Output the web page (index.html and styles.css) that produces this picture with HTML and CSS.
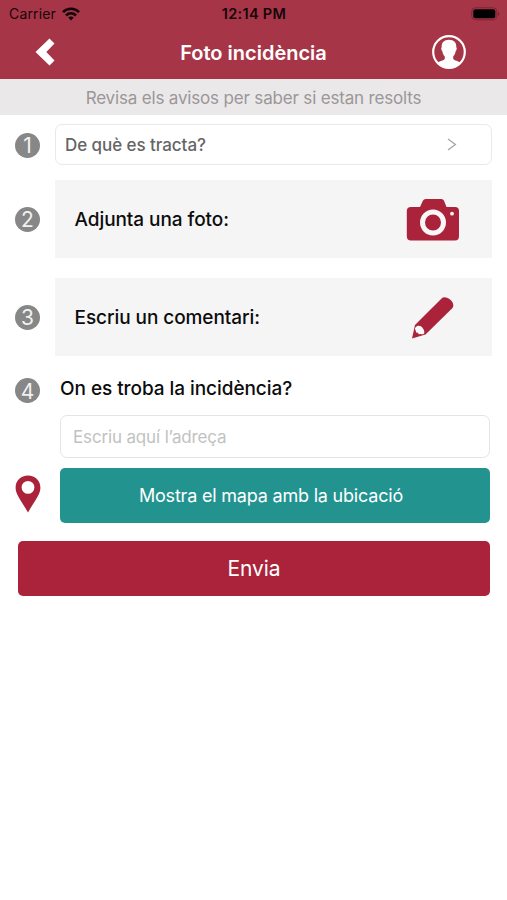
FILE: index.html
```html
<!DOCTYPE html>
<html lang="ca">
<head>
<meta charset="utf-8">
<title>Foto incidència</title>
<link rel="stylesheet" href="styles.css">
</head>
<body>
<header class="header">
  <div class="status">
    <div class="status-left">
      <span class="carrier">Carrier</span>
      <svg class="wifi" width="18" height="14" viewBox="0 0 18 14" fill="none" stroke="#120408" stroke-width="2.6"><path d="M1 5.1C5.5.7 12.500.7 17 5.100"/><path d="M4 8.500c2.900-2.800 7.100-2.800 10 0"/><path d="M6.300 10.600c1.500-1.500 3.900-1.500 5.400 0L9 13.400z" fill="#120408" stroke="none"/></svg>
    </div>
    <time class="clock">12:14 PM</time>
    <svg class="battery" width="29" height="14" viewBox="0 0 29 14"><rect x=".8" y=".8" width="25" height="12" rx="3.500" fill="none" stroke="#7d2335"/><rect x="2.300" y="2.300" width="22" height="9" rx="2" fill="#000"/><path d="M27.300 5q2 2 0 4z" fill="#65192a"/></svg>
  </div>
  <nav class="nav">
    <svg class="back" width="20" height="28" viewBox="0 0 20 28"><path d="M14.500.5 19.500 5.500 11.300 14l8.200 8.500-5 5L.5 14z" fill="#fff"/></svg>
    <h1 class="title">Foto incidència</h1>
    <svg class="profile" width="34" height="34" viewBox="0 0 34 34"><circle cx="17" cy="17" r="15.800" fill="none" stroke="#fff" stroke-width="2.200"/><path d="M17 4.800c-5 0-7.500 2.800-7.300 7.500-.8.500-.5 3.200.6 3.800.3 2.500 1.400 4.300 2.500 5.500v2.200c-1 2-5.200 2.200-7.600 4.200C8.500 31.300 12.300 33 17 33s8.500-1.700 11.800-5c-2.400-2-6.600-2.200-7.600-4.200v-2.200c1.100-1.200 2.200-3 2.500-5.500 1.100-.6 1.400-3.300.6-3.800.2-4.700-2.300-7.500-7.300-7.500z" fill="#fff"/></svg>
  </nav>
</header>
<p class="notice"><span>Revisa els avisos per saber si estan resolts</span></p>
<main class="form">
  <div class="row select-row">
    <span class="step"><span>1</span></span>
    <div class="select"><span class="select-label">De què es tracta?</span>
      <svg width="10" height="13" viewBox="0 0 10 13" fill="none" stroke="#a5a5a5" stroke-width="1.300"><path d="M1 1 8.400 6.500 1 12"/></svg>
    </div>
  </div>
  <div class="row card-row">
    <span class="step"><span>2</span></span>
    <div class="card"><span class="photo-label">Adjunta una foto:</span>
      <svg class="card-icon" width="54" height="44" viewBox="0 0 54 44"><path d="M5 9h9l3-6.500Q17.800 1 19.500 1h16q1.700 0 2.400 1.500L40.500 9H49q4 0 4 4v25q0 4.500-4 4.500H5q-4.200 0-4.200-4.500V13Q.8 9 5 9z" fill="#ab233b"/><circle cx="27" cy="24.500" r="10.500" fill="none" stroke="#f8f6f6" stroke-width="5"/><circle cx="46" cy="15.700" r="1.900" fill="#f8f6f6"/></svg>
    </div>
  </div>
  <div class="row card-row comment-row">
    <span class="step"><span>3</span></span>
    <div class="card"><span class="comment-label">Escriu un comentari:</span>
      <svg class="card-icon" width="54" height="44" viewBox="0 0 54 44"><path d="M6 42.500 9 29 35.300 2.700Q38.300-.2 43.500 3q5.500 4.500 3 9L19.500 38.500z" fill="#ab233b"/><path d="M9.400 31.500c2-2.700 5.500-2.100 7.300.4 2 2.600 2.100 5.300.9 6-1.500 1-2.600-.4-3.600.2-1.100.5-1.700.1-1.800-1.300-1.700.3-2.700-.6-2.300-2-.8-.9-1.300-2-.5-3.300z" fill="#fafafa"/></svg>
    </div>
  </div>
  <div class="row question-row">
    <span class="step"><span>4</span></span>
    <h2 class="question">On es troba la incidència?</h2>
  </div>
  <div class="address"><span>Escriu aquí l’adreça</span></div>
  <div class="row map-row">
    <svg class="pin" width="26" height="38" viewBox="0 0 26 38"><path fill-rule="evenodd" d="M13 .6C5.800.6.600 5.800.600 12.700.600 19.700 6.500 26 13 37.400 19.500 26 25.400 19.700 25.400 12.700 25.400 5.800 20.200.600 13 .600zM13 6a6.400 6.400 0 1 1 0 12.800A6.400 6.400 0 0 1 13 6z" fill="#ab233b"/></svg>
    <button class="map-button"><span>Mostra el mapa amb la ubicació</span></button>
  </div>
  <button class="send"><span>Envia</span></button>
</main>
</body>
</html>
```
FILE: styles.css
```css
* { box-sizing: border-box; }
body { margin: 0; background: #fff; font-family: Inter, "Liberation Sans", sans-serif; color: #0c0c0c; }
h1, h2, p { margin: 0; }
button { border: 0; padding: 0; font-family: inherit; color: #fff; }

.header { height: 79px; background: #a73548; }
.status { height: 27px; display: grid; grid-template-columns: 1fr auto 1fr; align-items: center; padding: 0 7px 0 9px; color: #160509; }
.status-left { display: flex; align-items: center; gap: 6px; }
.carrier { font-size: 14px; letter-spacing: .15px; }
.clock { font-size: 14.500px; font-weight: 600; letter-spacing: .3px; margin-right: 1px; }
.battery { justify-self: end; }
.nav { height: 50px; display: grid; grid-template-columns: 75px 1fr 75px; align-items: center; }
.back { margin-left: 35px; }
.title { justify-self: center; color: #fff; font-size: 20px; font-weight: 600; line-height: 26px; white-space: nowrap; padding-top: 1px; }
.profile { justify-self: start; }

.notice { height: 36px; display: flex; align-items: center; justify-content: center; background: #ebe8e9; color: #999798; font-size: 17px; letter-spacing: -.17px; padding-top: 2px; }

.form { padding-top: 9px; }
.row { display: grid; grid-template-columns: 55px 437px; align-items: center; }
.step { width: 25px; height: 25px; margin-left: 15px; border-radius: 50%; background: #878787; color: #f1f1f1; display: flex; align-items: center; justify-content: center; font-size: 21px; line-height: 25px; }
.step span { padding-top: 1px; }
.select-row .step { margin-top: 1px; }
.select { height: 41px; border: 1.500px solid #e7e9ea; border-radius: 7px; display: flex; align-items: center; justify-content: space-between; padding: 0 34px 0 9px; }
.select-label { font-size: 17px; font-weight: 500; letter-spacing: -.06px; color: #656565; }
.card-row { margin-top: 15px; }
.comment-row { margin-top: 20px; }
.card { height: 78px; background: #f5f5f5; display: flex; align-items: center; justify-content: space-between; padding: 0 32px 0 19.500px; font-size: 19px; font-weight: 500; letter-spacing: -.07px; }
.card-icon { margin-top: 2px; }
.question-row { height: 28px; margin-top: 19px; }
.question-row .step { margin-top: 3px; }
.question { margin-left: 5px; font-size: 19px; font-weight: 500; letter-spacing: -.06px; line-height: 26px; white-space: nowrap; }
.address { width: 430px; height: 43px; margin: 12px 0 0 60px; border: 1px solid #e4e4e4; border-radius: 7px; display: flex; align-items: center; padding-left: 12px; color: #c2c2c2; font-size: 17px; letter-spacing: -.15px; }
.map-row { margin-top: 10px; }
.pin { margin: -3px 0 0 15px; }
.map-button { width: 430px; height: 55px; margin-left: 5px; padding-right: 8px; border-radius: 5px; background: #239390; font-size: 18px; letter-spacing: -.2px; }
.send { display: block; width: 472px; height: 55px; margin: 18px 0 0 18px; border-radius: 5px; background: #ab233b; font-size: 21px; letter-spacing: -.1px; }
```
